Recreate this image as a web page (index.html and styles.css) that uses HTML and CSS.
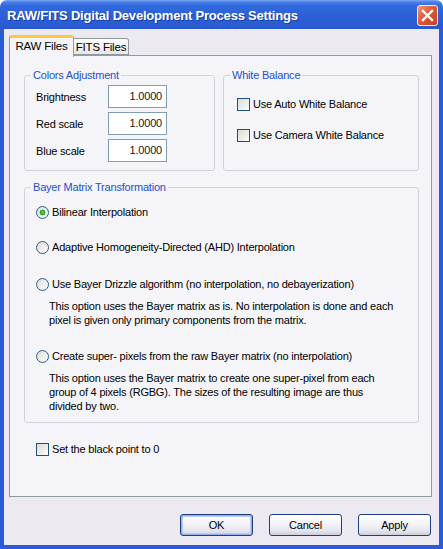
FILE: index.html
```html
<!DOCTYPE html>
<html>
<head>
<meta charset="utf-8">
<link rel="stylesheet" href="styles.css">
</head>
<body>
<div class="window">
  <div class="titlebar">
    <span class="title">RAW/FITS Digital Development Process Settings</span>
    <span class="close"><svg width="13" height="13" viewBox="0 0 13 13"><path d="M2 2 L11 11 M11 2 L2 11" stroke="#fff" stroke-width="2.4" stroke-linecap="square"/></svg></span>
  </div>
  <div class="frame">
    <div class="tabs">
      <div class="tab active">RAW Files</div>
      <div class="tab">FITS Files</div>
    </div>
    <div class="panel">
      <div class="top-row">
        <fieldset class="group colors">
          <legend>Colors Adjustment</legend>
          <div class="colors-body">
            <div class="field"><span class="lbl">Brightness</span><span class="num">1.0000</span></div>
            <div class="field"><span class="lbl">Red scale</span><span class="num">1.0000</span></div>
            <div class="field"><span class="lbl">Blue scale</span><span class="num">1.0000</span></div>
          </div>
        </fieldset>
        <fieldset class="group wb">
          <legend>White Balance</legend>
          <div class="wb-body">
            <div class="opt"><span class="box"></span><span>Use Auto White Balance</span></div>
            <div class="opt opt-wb2"><span class="box"></span><span>Use Camera White Balance</span></div>
          </div>
        </fieldset>
      </div>
      <fieldset class="group bayer">
        <legend>Bayer Matrix Transformation</legend>
        <div class="bayer-body">
          <div class="opt r1"><span class="radio checked"></span><span>Bilinear Interpolation</span></div>
          <div class="opt r2"><span class="radio"></span><span>Adaptive Homogeneity-Directed (AHD) Interpolation</span></div>
          <div class="opt r3"><span class="radio"></span><span>Use Bayer Drizzle algorithm (no interpolation, no debayerization)</span></div>
          <p class="desc">This option uses the Bayer matrix as is. No interpolation is done and each<br>pixel is given only primary components from the matrix.</p>
          <div class="opt r4"><span class="radio"></span><span>Create super- pixels from the raw Bayer matrix (no interpolation)</span></div>
          <p class="desc">This option uses the Bayer matrix to create one super-pixel from each<br>group of 4 pixels (RGBG). The sizes of the resulting image are thus<br>divided by two.</p>
        </div>
      </fieldset>
      <div class="opt black"><span class="box"></span><span>Set the black point to 0</span></div>
    </div>
    <div class="buttons">
      <span class="btn default">OK</span>
      <span class="btn">Cancel</span>
      <span class="btn">Apply</span>
    </div>
  </div>
</div>
</body>
</html>
```
FILE: styles.css
```css
html, body {
  margin: 0;
  padding: 0;
  background: #ffffff;
}
.window {
  width: 443px;
  height: 549px;
  display: flex;
  flex-direction: column;
  font-family: "Liberation Sans", Arial, sans-serif;
  font-size: 11px;
  letter-spacing: -0.2px;
  color: #000;
  border-radius: 7px 7px 0 0;
  overflow: hidden;
}
.titlebar {
  height: 29px;
  flex: none;
  display: flex;
  align-items: center;
  justify-content: space-between;
  padding: 0 5px 0 7px;
  background: linear-gradient(to bottom, #7AA6F2 0px, #4A80E8 2px, #3169DE 6px, #2C60D8 16px, #2A5BD2 26px, #2856CB 29px);
}
.title {
  color: #fff;
  font-family: "Liberation Sans", Arial, sans-serif;
  font-weight: bold;
  font-size: 13px;
  letter-spacing: -0.2px;
  text-shadow: 1px 1px 0 #173C9E;
  margin-top: 1px;
}
.close {
  width: 21px;
  height: 21px;
  box-sizing: border-box;
  border: 1px solid #F4F0EE;
  border-radius: 3px;
  background: linear-gradient(135deg, #EE9A7C, #DD5A37 45%, #C8421F);
  display: flex;
  align-items: center;
  justify-content: center;
  margin-top: 2px;
}
.frame {
  flex: 1;
  background: #ECEAF0;
  border: 4px solid #2B5CD7;
  border-top: 0;
  padding: 6px 7px 0 5px;
  display: flex;
  flex-direction: column;
}
.tabs {
  display: flex;
  align-items: flex-end;
  height: 22px;
  margin-bottom: -2px;
  position: relative;
  z-index: 1;
}
.tab {
  box-sizing: border-box;
  display: flex;
  align-items: center;
  justify-content: center;
  font-size: 11.5px;
}
.tab.active {
  width: 65px;
  height: 22px;
  background: #F5F5F9;
  border: 1px solid #919B9C;
  border-bottom: none;
  border-top: 3px solid #FFC83C;
  border-radius: 3px 3px 0 0;
  padding-bottom: 3px;
}
.tab:not(.active) {
  width: 55px;
  height: 17px;
  margin-bottom: 2px;
  background: linear-gradient(#FFFFFF, #F0F0F4 60%, #E4E4EC);
  border: 1px solid #919B9C;
  border-left: none;
  border-radius: 0 3px 0 0;
  padding-top: 1px;
}
.panel {
  width: 423px;
  height: 442px;
  box-sizing: border-box;
  border: 1px solid #919B9C;
  background: #F5F5F9;
  padding: 13px 0 0 14px;
}
.top-row {
  display: flex;
  gap: 8px;
}
fieldset.group {
  margin: 0;
  padding: 0;
  border: 1px solid #D2D2D8;
  border-radius: 3px;
  min-width: 0;
  box-sizing: border-box;
}
legend {
  margin-left: 6px;
  padding: 0 2px;
  line-height: 13px;
  color: #2350CE;
}
.colors {
  width: 191px;
}
.wb {
  width: 196px;
}
.colors-body {
  display: flex;
  flex-direction: column;
  gap: 4px;
  padding: 3px 0 8px 11px;
}
.field {
  display: flex;
  align-items: center;
}
.lbl {
  width: 72px;
}
.num {
  width: 59px;
  height: 23px;
  box-sizing: border-box;
  border: 1px solid #7F9DB9;
  background: #fff;
  text-align: right;
  padding-right: 4px;
  line-height: 21px;
  color: #1a1420;
}
.wb-body {
  padding: 15px 0 0 13px;
}
.opt {
  display: flex;
  align-items: center;
  gap: 3px;
  height: 14px;
}
.opt-wb2 {
  margin-top: 17px;
}
.box {
  width: 13px;
  height: 13px;
  box-sizing: border-box;
  border: 1px solid #1C5180;
  background: linear-gradient(135deg, #DCDCD7, #F2F2EE 70%, #FFFFFF);
  flex: none;
}
.radio {
  width: 13px;
  height: 13px;
  box-sizing: border-box;
  border: 1px solid #2F5A83;
  border-radius: 50%;
  background: linear-gradient(135deg, #DCDCD7, #F4F4F0 70%, #FFFFFF);
  flex: none;
}
.radio.checked {
  background: radial-gradient(circle at 50% 50%, #6FDB6F 0, #33B433 1.6px, #21A121 2.6px, rgba(33,161,33,0) 3.2px), linear-gradient(135deg, #DCDCD7, #F4F4F0 70%, #FFFFFF);
}
fieldset.bayer {
  width: 395px;
  margin-top: 10px;
}
.bayer-body {
  padding: 0 0 9px 11px;
}
.r1 { margin-top: 11px; }
.r2 { margin-top: 21px; }
.r3 { margin-top: 23px; }
.r4 { margin-top: 22px; }
.desc {
  margin: 8px 0 0 13px;
  line-height: 14px;
}
.black {
  margin: 19px 0 0 12px;
}
.buttons {
  display: flex;
  justify-content: flex-end;
  gap: 16px;
  margin-top: 17px;
  padding-right: 1px;
}
.btn {
  width: 73px;
  height: 22px;
  box-sizing: border-box;
  border: 1px solid #1F3E84;
  border-radius: 3px;
  background: linear-gradient(#FFFFFF, #F3F3F8 45%, #E4E4EE 80%, #CDCDDC);
  display: flex;
  align-items: center;
  justify-content: center;
}
.btn.default {
  box-shadow: inset 0 0 0 1px #8FB0EC, inset 0 0 0 2px #B8CEF4;
}
```
